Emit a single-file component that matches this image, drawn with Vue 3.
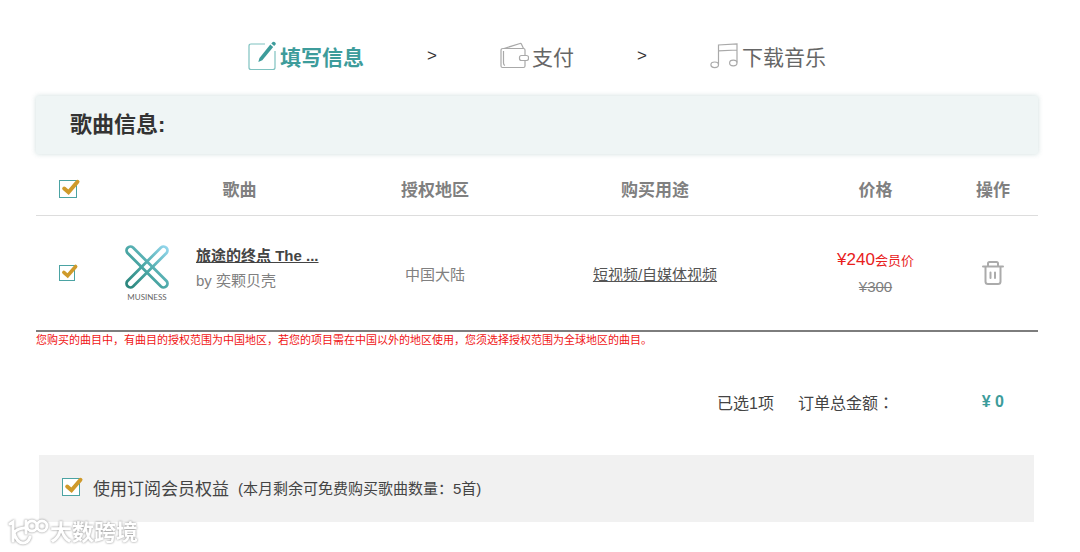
<template>
  <main class="order-page">
    <svg class="defs" aria-hidden="true">
      <symbol id="tick" viewBox="0 0 18 18" overflow="visible">
        <path d="M3.200 9.500L7.500 13.200L16.500 2.800" fill="none" stroke="#cf9a2b" stroke-width="4" stroke-linecap="round" />
      </symbol>
    </svg>

    <ol class="steps">
      <li class="step active">
        <svg class="step-icon" viewBox="0 0 29 30" fill="none">
          <path d="M17 3H3Q1 3 1 5V26.500Q1 28.500 3 28.500H25Q27 28.500 27 26.500V10" stroke="#7fc2c0" stroke-width="1.200" />
          <path d="M10.300 21L11.500 17L22.300 3.600L25.200 6L14.300 19.300Z" fill="#3d9c9b" />
          <path d="M23.300 2.600L24.700 1Q26 0.300 27.200 1.400Q28.300 2.500 27.500 3.500L26.200 5Z" fill="#3d9c9b" />
        </svg>
        <span>填写信息</span>
      </li>
      <li class="arrow" aria-hidden="true">&gt;</li>
      <li class="step">
        <svg class="step-icon" viewBox="0 0 29 30" fill="none" stroke="#a9a9a9" stroke-width="1.200">
          <path d="M25 14V9Q25 7.500 23.500 7.500H3Q1 7.500 1 9.500V25Q1 26.500 2.500 26.500H23.500Q25 26.500 25 25V20" />
          <path d="M4 7.500L20 2.500Q21 2.200 21.500 3.200L23.500 7.500M3.500 10V22Q3.500 24 5 24.500" />
          <rect x="19.500" y="14.500" width="9" height="5" rx="2" />
        </svg>
        <span>支付</span>
      </li>
      <li class="arrow" aria-hidden="true">&gt;</li>
      <li class="step">
        <svg class="step-icon" viewBox="0 0 29 30" fill="none" stroke="#a9a9a9" stroke-width="1.200">
          <path d="M8.500 23.500V4L27 3V21.500M8.500 9.800L27 9" />
          <ellipse cx="4.700" cy="23.800" rx="3.800" ry="2.800" />
          <ellipse cx="23.300" cy="22" rx="3.700" ry="2.800" />
        </svg>
        <span>下载音乐</span>
      </li>
    </ol>

    <h1 class="card-title">歌曲信息:</h1>

    <table class="songs">
      <thead>
        <tr>
          <th class="col-check">
            <label class="check">
              <input v-model="allSelected" type="checkbox" aria-label="全选" />
              <svg v-if="allSelected" class="tick"><use href="#tick" /></svg>
            </label>
          </th>
          <th class="col-song">歌曲</th>
          <th class="col-region">授权地区</th>
          <th>购买用途</th>
          <th class="col-price">价格</th>
          <th class="col-action">操作</th>
        </tr>
      </thead>
      <tbody>
        <tr v-for="song in songs" :key="song.id">
          <td class="col-check">
            <label class="check small">
              <input v-model="song.selected" type="checkbox" :aria-label="song.title" />
              <svg v-if="song.selected" class="tick"><use href="#tick" /></svg>
            </label>
          </td>
          <td>
            <div class="song">
              <svg class="cover" viewBox="0 0 56 60">
                <defs>
                  <linearGradient id="brand" gradientUnits="userSpaceOnUse" x1="-20" y1="20" x2="20" y2="-20">
                    <stop offset="0" stop-color="#2a857b" />
                    <stop offset="0.500" stop-color="#4eaaa9" />
                    <stop offset="1" stop-color="#93d6ec" />
                  </linearGradient>
                </defs>
                <g transform="translate(28 24)" fill="none" stroke="url(#brand)" stroke-width="2.800">
                  <path d="M-14 -19.500L19.500 14A3.900 3.900 0 0 1 14 19.500L-19.500 -14A3.900 3.900 0 0 1 -14 -19.500Z" />
                  <path d="M-19.500 14L14 -19.500A3.900 3.900 0 0 1 19.500 -14L-14 19.500A3.900 3.900 0 0 1 -19.500 14Z" />
                </g>
                <text x="28" y="57" text-anchor="middle" class="cover-name">MUSINESS</text>
              </svg>
              <div class="song-text">
                <a href="#" class="song-title">{{ song.title }}</a>
                <div class="artist">by {{ song.artist }}</div>
              </div>
            </div>
          </td>
          <td>{{ song.region }}</td>
          <td><a href="#" class="usage">{{ song.usage }}</a></td>
          <td class="price">
            <div class="member-price">¥{{ song.memberPrice }}<small>会员价</small></div>
            <div><s>¥{{ song.price }}</s></div>
          </td>
          <td>
            <button type="button" class="remove" aria-label="删除">
              <svg viewBox="0 0 24 26" fill="none" stroke="#ababab" stroke-width="2" stroke-linecap="round" stroke-linejoin="round">
                <path d="M2 6.500H22M7 6V3.500Q7 2 8.500 2H15.500Q17 2 17 3.500V6" />
                <path d="M4.500 7V21.500Q4.500 24 7 24H17Q19.500 24 19.500 21.500V7M9.500 12.500V18M14 12.500V18" />
              </svg>
            </button>
          </td>
        </tr>
      </tbody>
    </table>

    <p class="notice">您购买的曲目中，有曲目的授权范围为中国地区，若您的项目需在中国以外的地区使用，您须选择授权范围为全球地区的曲目。</p>

    <div class="summary">
      <span>已选{{ selectedCount }}项</span>
      <span class="total-label">订单总金额<span class="colon">：</span></span>
      <strong class="total">¥ 0</strong>
    </div>

    <div class="benefit">
      <label class="benefit-label">
        <span class="check">
          <input v-model="useBenefit" type="checkbox" />
          <svg v-if="useBenefit" class="tick"><use href="#tick" /></svg>
        </span>
        <span class="benefit-name">使用订阅会员权益</span>
        <span class="benefit-quota">(本月剩余可免费购买歌曲数量：5首)</span>
      </label>
    </div>

    <div class="watermark">
      <svg viewBox="0 0 42 30" fill="none" stroke="#fff" stroke-width="3" stroke-linecap="round">
        <path d="M2 6L5 4V23M16 10Q8 11 6 15Q9 25 15 25Q20 25 22 19M18 3V15" />
        <circle cx="24" cy="8" r="5" />
        <circle cx="34" cy="8" r="5" />
      </svg>
      <span>大数跨境</span>
    </div>
  </main>
</template>

<script setup>
import { computed, ref } from 'vue'

const songs = ref([
  {
    id: 1,
    title: '旅途的终点 The ...',
    artist: '奕颗贝壳',
    region: '中国大陆',
    usage: '短视频/自媒体视频',
    memberPrice: 240,
    price: 300,
    selected: true
  }
])

const useBenefit = ref(true)

const selectedCount = computed(() => songs.value.filter((song) => song.selected).length)

const allSelected = computed({
  get: () => songs.value.every((song) => song.selected),
  set: (value) => songs.value.forEach((song) => (song.selected = value))
})
</script>

<style>
body {
  margin: 0;
  background: #fff;
}
</style>

<style scoped>
.order-page {
  position: relative;
  padding: 36px 42px 30px 36px;
  font-family: "Liberation Sans", "Noto Sans CJK SC", sans-serif;
  font-size: 15px;
  color: #444;
}

.defs {
  position: absolute;
  width: 0;
  height: 0;
}

.steps {
  display: flex;
  justify-content: center;
  align-items: center;
  gap: 63px;
  height: 40px;
  margin: 0 0 20px;
  padding: 0;
  list-style: none;
}

.step {
  display: flex;
  align-items: center;
  gap: 3px;
  font-size: 21px;
  color: #666;
}

.step.active {
  color: #3d9c9b;
  font-weight: 700;
}

.step-icon {
  width: 29px;
  height: 30px;
}

.arrow {
  font-size: 17px;
  color: #333;
}

.card-title {
  margin: 0 0 8px;
  padding: 0 34px;
  font-size: 22px;
  line-height: 58px;
  color: #333;
  background: #eff5f5;
  border-radius: 2px;
  box-shadow: 0 0 5px rgba(60, 120, 120, 0.25);
}

.songs {
  width: 100%;
  table-layout: fixed;
  border-collapse: collapse;
  text-align: center;
  color: #808080;
}

.songs th,
.songs td {
  padding: 0;
}

.songs th {
  height: 53px;
  font-size: 17px;
  border-bottom: 1px solid #ddd;
}

.songs td {
  height: 114px;
  border-bottom: 2px solid #7d7d7d;
}

.songs .col-check {
  width: 57px;
  padding-left: 23px;
  text-align: left;
}

.col-song {
  width: 247px;
}

.col-region {
  width: 144px;
}

.col-price {
  width: 145px;
}

.col-action {
  width: 90px;
}

.check {
  position: relative;
  display: block;
  width: 18px;
  height: 18px;
}

.check input {
  appearance: none;
  display: block;
  box-sizing: border-box;
  width: 100%;
  height: 100%;
  margin: 0;
  border: 1px solid #4ba3a3;
  background: #fff;
}

.check.small {
  width: 16px;
  height: 16px;
}

.tick {
  position: absolute;
  left: 2px;
  top: -1px;
  width: 100%;
  height: 100%;
  overflow: visible;
  pointer-events: none;
}

.song {
  display: flex;
  gap: 21px;
  padding-left: 3px;
  text-align: left;
}

.cover {
  width: 56px;
  height: 60px;
}

.cover-name {
  font-family: Lato, sans-serif;
  font-size: 8px;
  fill: #666;
}

.song-text {
  line-height: 25px;
}

.song-title {
  font-weight: 700;
  color: #444;
}

.usage {
  color: #555;
}

.price {
  line-height: 26px;
}

.member-price {
  font-size: 17px;
  color: #e8201c;
}

.member-price small {
  font-size: 13px;
}

.remove {
  width: 24px;
  height: 26px;
  padding: 0;
  border: 0;
  background: none;
  vertical-align: middle;
  cursor: pointer;
}

.remove svg {
  display: block;
}

.notice {
  margin: 0;
  font-size: 11px;
  line-height: 16px;
  color: #f01414;
}

.summary {
  display: flex;
  justify-content: flex-end;
  align-items: center;
  height: 107px;
  padding-right: 34px;
  font-size: 16px;
}

.total-label {
  margin-left: 24px;
}

.colon {
  font-family: "Noto Sans CJK TC", sans-serif;
}

.total {
  width: 110px;
  text-align: right;
  color: #3d9c9b;
}

.benefit {
  margin: 0 4px 0 3px;
  padding: 0 23px 3px;
  background: #f1f1f1;
}

.benefit-label {
  display: flex;
  align-items: center;
  height: 64px;
}

.benefit-name {
  margin: 0 9px 0 13px;
  font-size: 17px;
}

.watermark {
  position: absolute;
  left: 8px;
  bottom: 4px;
  display: flex;
  align-items: center;
  font-size: 22px;
  line-height: 30px;
  font-weight: 700;
  color: #fff;
  filter: drop-shadow(0 0 1px #888);
}

.watermark svg {
  width: 42px;
  height: 30px;
}
</style>
